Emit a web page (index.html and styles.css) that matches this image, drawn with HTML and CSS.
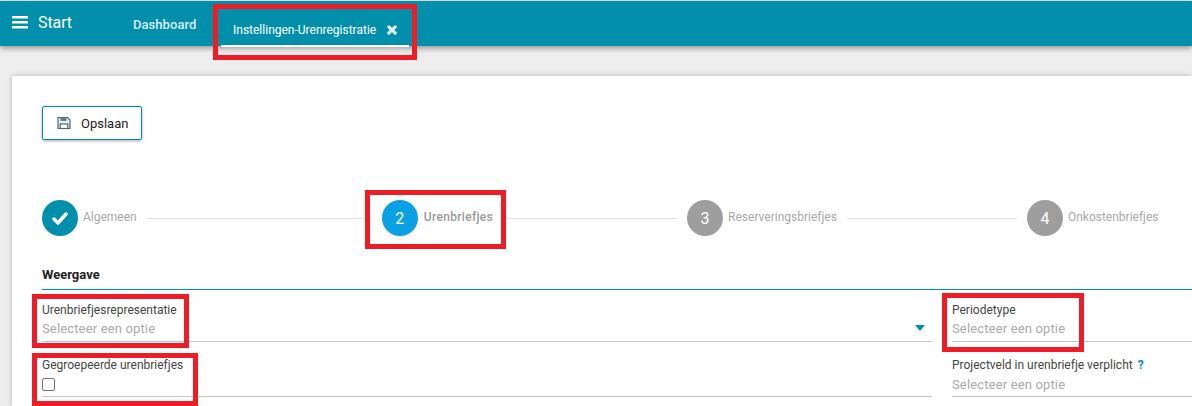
FILE: index.html
```html
<!DOCTYPE html>
<html>

<head>
  <title>Instellingen-Urenregistratie</title>
  <link rel="stylesheet" href="styles.css">
</head>

<body>
  <!-- Top bar -->
  <div class="topbar">
    <div class="start">
      <svg class="bars-icon" viewBox="0 0 16 13" fill="#fff">
        <rect x="0" y="0" width="16" height="2.6" rx="0.5"></rect>
        <rect x="0" y="5" width="16" height="2.6" rx="0.5"></rect>
        <rect x="0" y="10" width="16" height="2.6" rx="0.5"></rect>
      </svg>
      <span>Start</span>
    </div>
    <a class="nav-link">Dashboard</a>
    <div class="nav-tab">
      <span>Instellingen-Urenregistratie</span>
      <svg class="close-icon" viewBox="0 0 10 10" fill="none" stroke="#e6f4f7" stroke-width="3.1" stroke-linecap="round">
        <line x1="1.8" y1="1.8" x2="8.2" y2="8.2"></line>
        <line x1="8.2" y1="1.8" x2="1.8" y2="8.2"></line>
      </svg>
    </div>
  </div>

  <div class="card">
    <button class="btn-save">
      <svg class="save-icon" viewBox="0 0 14 14" fill="none" stroke="#4d6673" stroke-width="1.2">
        <path d="M1 1.5h9.5L13 4v8.5H1z" fill="#e4eef2"></path>
        <rect x="3.5" y="1.5" width="6" height="3.4" fill="#5b7c8c" stroke="none"></rect>
        <rect x="3.2" y="8" width="7.6" height="4.5" fill="#fff"></rect>
      </svg>
      <span>Opslaan</span>
    </button>

    <!-- Stepper -->
    <div class="stepper">
      <div class="step">
        <div class="step-circle step-done">
          <svg class="check-icon" viewBox="0 0 16 13" fill="none" stroke="#fff" stroke-width="3.4" stroke-linecap="round" stroke-linejoin="round">
            <path d="M2 7l4 4 8-9"></path>
          </svg>
        </div>
        <span class="step-label">Algemeen</span>
      </div>
      <div class="step-line line-first"></div>
      <div class="step">
        <div class="step-circle step-active">2</div>
        <span class="step-label step-label-active">Urenbriefjes</span>
      </div>
      <div class="step-line line-second"></div>
      <div class="step">
        <div class="step-circle">3</div>
        <span class="step-label">Reserveringsbriefjes</span>
      </div>
      <div class="step-line line-third"></div>
      <div class="step">
        <div class="step-circle">4</div>
        <span class="step-label">Onkostenbriefjes</span>
      </div>
    </div>

    <h3 class="section-title">Weergave</h3>

    <div class="fields">
      <div class="field">
        <label class="field-label">Urenbriefjesrepresentatie</label>
        <div class="field-value">
          <span>Selecteer een optie</span>
          <span class="caret"></span>
        </div>
      </div>
      <div class="field">
        <label class="field-label">Periodetype</label>
        <div class="field-value"><span>Selecteer een optie</span></div>
      </div>
      <div class="field">
        <label class="field-label">Gegroepeerde urenbriefjes</label>
        <div class="field-value field-value-plain"><span class="checkbox"></span></div>
      </div>
      <div class="field">
        <label class="field-label">Projectveld in urenbriefje verplicht <b class="help">?</b></label>
        <div class="field-value field-value-plain"><span>Selecteer een optie</span></div>
      </div>
    </div>
  </div>

  <!-- Red annotation boxes -->
  <div class="mark mark-tab"></div>
  <div class="mark mark-step"></div>
  <div class="mark mark-repr"></div>
  <div class="mark mark-group"></div>
  <div class="mark mark-period"></div>
</body>

</html>
```

FILE: styles.css
```css
* {
  box-sizing: border-box;
}

html,
body {
  height: 100%;
}

body {
  font-family: Roboto, 'Liberation Sans', sans-serif;
  background-color: #eeeeee;
  color: #333333;
  margin: 0;
  padding: 1px 0 0 0;
  overflow: hidden;
  position: relative;
}

.topbar {
  display: flex;
  align-items: flex-start;
  height: 45px;
  background-color: #028fac;
  box-shadow: 0 2px 6px rgba(0, 0, 0, 0.4);
  color: #ffffff;
}

.start {
  display: flex;
  align-items: center;
  gap: 10px;
  width: 133px;
  height: 45px;
  padding: 0 0 0 12px;
  margin-top: -1px;
  font-size: 16px;
  letter-spacing: -0.1px;
}

.bars-icon {
  width: 16px;
  height: 13px;
}

.nav-link {
  font-size: 13px;
  font-weight: 500;
  letter-spacing: 0.05px;
  color: #d9eef3;
  line-height: 47px;
  width: 88px;
}

.nav-tab {
  display: flex;
  align-items: center;
  gap: 11px;
  width: 188px;
  height: 46px;
  padding: 13px 0 0 12px;
  font-size: 12px;
  font-weight: 400;
  border-bottom: 2px solid #ffffff;
}

.close-icon {
  width: 10px;
  height: 10px;
}

.card {
  margin: 30px 0 0 12px;
  padding: 30px 0 0 30px;
  height: 330px;
  background-color: #ffffff;
  box-shadow: 0 0 5px rgba(0, 0, 0, 0.25);
}

.btn-save {
  display: flex;
  align-items: center;
  gap: 10px;
  width: 100px;
  height: 34px;
  padding: 0 0 0 14px;
  background-color: #ffffff;
  border: 1px solid #028fac;
  border-radius: 2px;
  box-shadow: 0 1px 3px rgba(0, 0, 0, 0.35);
  font-family: inherit;
  font-size: 13px;
  color: #222222;
}

.save-icon {
  width: 14px;
  height: 14px;
}

.stepper {
  display: flex;
  align-items: center;
  margin-top: 60px;
  height: 36px;
}

.step {
  display: flex;
  align-items: center;
  gap: 5px;
}

.step-circle {
  display: flex;
  align-items: center;
  justify-content: center;
  width: 36px;
  height: 36px;
  border-radius: 50%;
  background-color: #9e9e9e;
  color: #ffffff;
  font-size: 16px;
}

.step-done {
  background-color: #028fac;
}

.step-active {
  background-color: #0b9fe3;
}

.check-icon {
  width: 16px;
  height: 13px;
}

.step-label {
  font-size: 12px;
  color: #a8a8a8;
  margin-top: -3px;
}

.step-label-active {
  font-weight: 500;
  letter-spacing: 0.33px;
  margin-left: 1px;
  color: #999999;
}

.step-line {
  height: 1px;
  background-color: #e0e0e0;
  margin: 0 10px;
}

.line-first {
  width: 225px;
}

.line-second {
  width: 174px;
}

.line-third {
  width: 170px;
}

.section-title {
  margin: 30px 0 0 0;
  height: 24px;
  font-size: 13px;
  font-weight: 700;
  line-height: 18px;
  color: #222222;
  border-bottom: 1px solid #028fac;
}

.fields {
  display: grid;
  grid-template-columns: 890px 1fr;
  column-gap: 20px;
}

.field {
  height: 55px;
  padding-top: 13px;
}

.field-label {
  display: block;
  font-size: 12px;
  line-height: 14px;
  color: #444444;
}

.field-value {
  display: flex;
  align-items: center;
  justify-content: space-between;
  height: 25px;
  padding-bottom: 2px;
  font-size: 13px;
  letter-spacing: 0.15px;
  color: #aaaaaa;
  border-bottom: 1px solid #c4c4c4;
}

.field-value-plain {
  padding-bottom: 0;
}

.caret {
  width: 0;
  height: 0;
  margin-right: 7px;
  border-left: 5.5px solid transparent;
  border-right: 5.5px solid transparent;
  border-top: 6px solid #028fac;
}

.checkbox {
  width: 13px;
  height: 13px;
  border: 1px solid #767676;
  border-radius: 2px;
  background-color: #ffffff;
}

.help {
  margin-left: 2px;
  color: #028fac;
}

/* Annotations lying over the screenshot */
.mark {
  position: absolute;
  border: 5px solid #ee1c25;
}

.mark-tab {
  left: 213px;
  top: 4px;
  width: 204px;
  height: 56px;
}

.mark-step {
  left: 365px;
  top: 190px;
  width: 141px;
  height: 59px;
}

.mark-repr {
  left: 32px;
  top: 294px;
  width: 157px;
  height: 54px;
}

.mark-group {
  left: 32px;
  top: 353px;
  width: 166px;
  height: 53px;
}

.mark-period {
  left: 942px;
  top: 293px;
  width: 142px;
  height: 59px;
}
```
